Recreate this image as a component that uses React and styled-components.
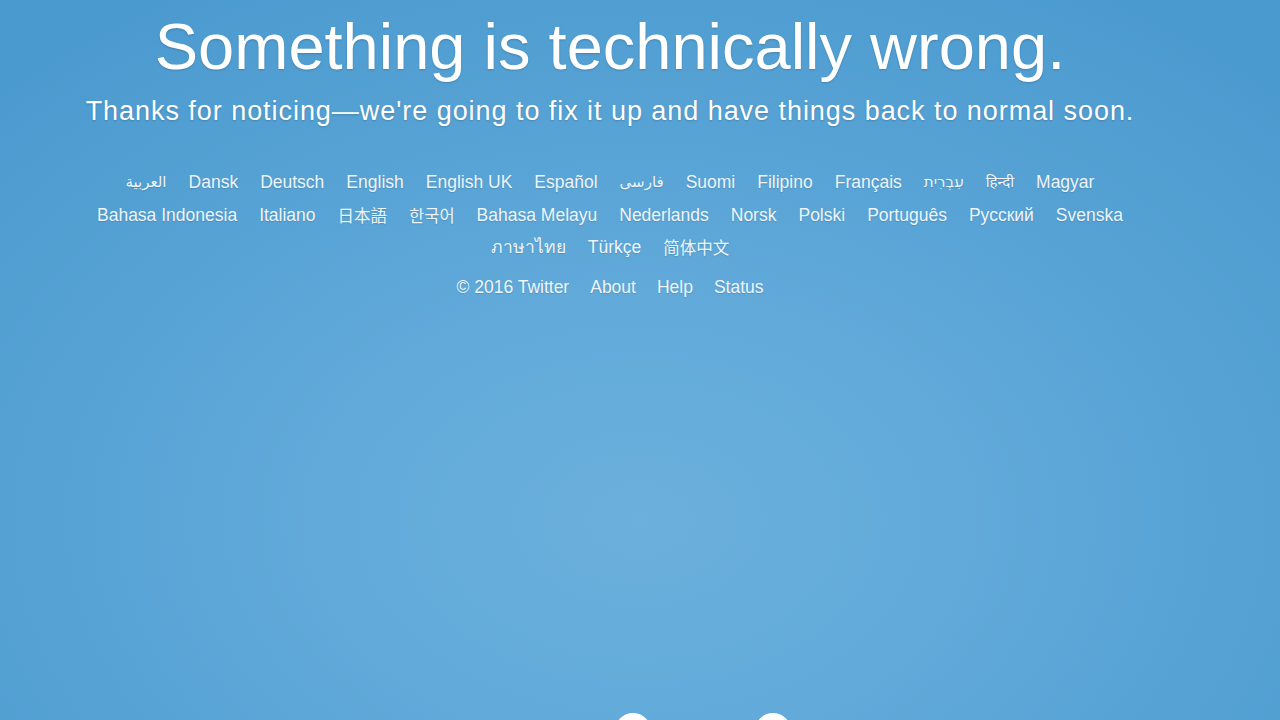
import React from "react";
import styled, { createGlobalStyle } from "styled-components";

const Global = createGlobalStyle`
  html, body {
    margin: 0;
    padding: 0;
    height: 100%;
    overflow: hidden;
  }
  body {
    background: radial-gradient(ellipse 900px 620px at 640px 520px, #6cb0dc 0%, #61aada 35%, #55a1d4 70%, #4b9acf 100%);
    background-color: #4b9acf;
    font-family: "Liberation Sans", Arial, "DejaVu Sans", "Noto Sans CJK SC", sans-serif;
    color: #fff;
  }
`;

const Page = styled.main`
  width: 1220px;
  display: flex;
  flex-direction: column;
  align-items: center;
  padding-top: 8px;
`;

const Title = styled.h1`
  margin: 0;
  font-size: 65px;
  line-height: 78px;
  font-weight: 400;
  color: #fff;
  text-shadow: 0 1px 2px rgba(0, 0, 0, 0.18);
  white-space: nowrap;
`;

const Subtitle = styled.p`
  margin: 9px 0 0;
  font-size: 27px;
  line-height: 32px;
  letter-spacing: 0.95px;
  color: #fff;
  text-shadow: 0 1px 2px rgba(0, 0, 0, 0.18);
  white-space: nowrap;
`;

const Languages = styled.nav`
  margin-top: 39px;
  display: flex;
  flex-direction: column;
  align-items: center;
`;

const LangRow = styled.ul`
  list-style: none;
  margin: 0;
  padding: 0;
  display: flex;
  gap: 22px;
  height: 32.5px;
  align-items: center;
`;

const fonts = {
  latin: '"Liberation Sans", Arial, "DejaVu Sans", "Noto Sans", sans-serif',
  cjk: '"Noto Sans CJK SC", "Noto Sans CJK KR", sans-serif',
  rtl: '"DejaVu Sans", "Noto Sans", sans-serif',
};

const sizes = { latin: "17.5px", cjk: "16.5px", rtl: "15px" };

const Link = styled.a`
  font-family: ${(p) => fonts[p.$script || "latin"]};
  font-size: ${(p) => sizes[p.$script || "latin"]};
  line-height: 32px;
  color: rgba(255, 255, 255, 0.92);
  text-decoration: none;
  text-shadow: 0 1px 1px rgba(0, 0, 0, 0.12);
  white-space: nowrap;
`;

const Footer = styled.ul`
  list-style: none;
  margin: 7px 0 0;
  padding: 0;
  display: flex;
  gap: 21px;
  height: 32px;
  align-items: center;
`;

const Illustration = styled.svg`
  display: block;
  margin-top: 410px;
  flex-shrink: 0;
`;

const rows = [
  [
    ["العربية", "rtl"],
    ["Dansk"],
    ["Deutsch"],
    ["English"],
    ["English UK"],
    ["Español"],
    ["فارسی", "rtl"],
    ["Suomi"],
    ["Filipino"],
    ["Français"],
    ["עִבְרִית", "rtl"],
    ["हिन्दी", "rtl"],
    ["Magyar"],
  ],
  [
    ["Bahasa Indonesia"],
    ["Italiano"],
    ["日本語", "cjk"],
    ["한국어", "cjk"],
    ["Bahasa Melayu"],
    ["Nederlands"],
    ["Norsk"],
    ["Polski"],
    ["Português"],
    ["Русский"],
    ["Svenska"],
  ],
  [["ภาษาไทย"], ["Türkçe"], ["简体中文", "cjk"]],
];

const footer = ["© 2016 Twitter", "About", "Help", "Status"];

export default function App() {
  return (
    <>
      <Global />
      <Page>
        <Title>Something is technically wrong.</Title>
        <Subtitle>
          Thanks for noticing—we're going to fix it up and have things back to normal soon.
        </Subtitle>
        <Languages>
          {rows.map((row, i) => (
            <LangRow key={i}>
              {row.map(([label, script]) => (
                <li key={label}>
                  <Link href="#" $script={script}>
                    {label}
                  </Link>
                </li>
              ))}
            </LangRow>
          ))}
        </Languages>
        <Footer>
          {footer.map((f) => (
            <li key={f}>
              <Link href="#">{f}</Link>
            </li>
          ))}
        </Footer>
        <Illustration width="1220" height="60" viewBox="0 0 1220 60">
          <circle cx="633" cy="18" r="18" fill="#fff" />
          <circle cx="773" cy="18" r="18" fill="#fff" />
        </Illustration>
      </Page>
    </>
  );
}
